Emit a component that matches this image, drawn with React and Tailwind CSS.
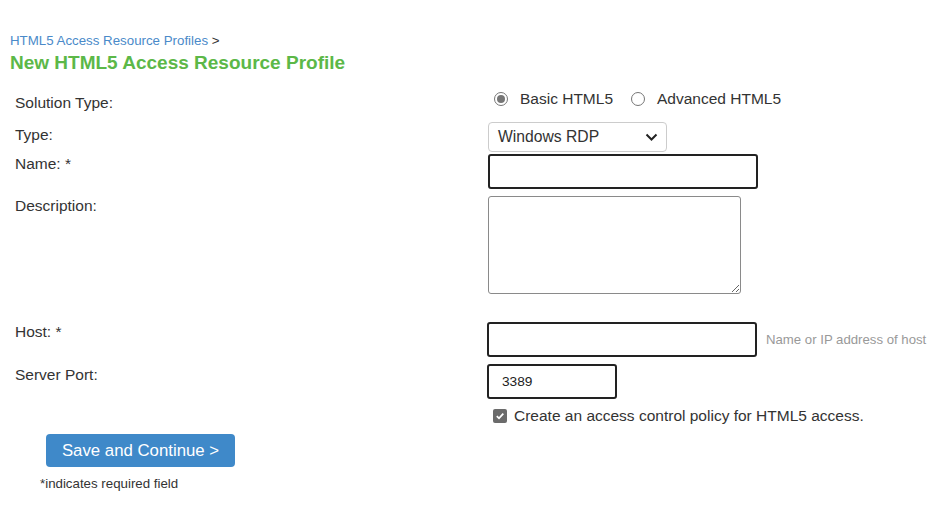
import React from 'react';

const Label = ({ children, top }) => (
  <div className={`w-[488px] shrink-0 pl-[15px] text-[15.5px] leading-[18px] text-[#333] ${top}`}>{children}</div>
);

const Radio = ({ checked, label }) => (
  <label className="flex items-center gap-[12px]">
    <span className="flex h-[14px] w-[14px] items-center justify-center rounded-full border border-[#767676] bg-white">
      {checked && <span className="h-[8px] w-[8px] rounded-full bg-[#767676]" />}
    </span>
    <span className="text-[15.5px] leading-[18px] text-[#333]">{label}</span>
  </label>
);

export default function App() {
  return (
    <div className="min-h-[505px] w-[942px] bg-white pt-[33px] font-['Liberation_Sans',Arial,sans-serif]">
      <div className="pl-[10px] text-[13.3px] leading-[16px]">
        <a className="text-[#4a8ac9]">HTML5 Access Resource Profiles</a>
        <span className="text-[#333]"> &gt;</span>
      </div>
      <h1 className="mt-[3px] pl-[10px] text-[19px] font-bold leading-[22px] text-[#5cb848]">
        New HTML5 Access Resource Profile
      </h1>

      {/* solution type */}
      <div className="mt-[14px] flex h-[34px]">
        <Label top="pt-[6px]">Solution Type:</Label>
        <div className="flex h-[22px] items-center pl-[6px]">
          <div className="flex items-center gap-[18px]">
            <Radio checked label="Basic HTML5" />
            <Radio label="Advanced HTML5" />
          </div>
        </div>
      </div>

      {/* type */}
      <div className="flex h-[32px] items-start">
        <Label top="pt-[4px]">Type:</Label>
        <div className="flex h-[30px] w-[179px] items-center justify-between rounded-[4px] border border-[#ccc] pl-[9px] pr-[8px]">
          <span className="text-[15.7px] text-[#333]">Windows RDP</span>
          <svg width="13" height="9" viewBox="0 0 13 9" fill="none">
            <path d="M1.5 1.5 L6.5 6.5 L11.5 1.5" stroke="#222" strokeWidth="2" />
          </svg>
        </div>
      </div>

      {/* name */}
      <div className="flex h-[42px] items-start">
        <Label top="pt-[1px]">Name: *</Label>
        <input className="h-[35px] w-[270px] rounded-[3px] border-2 border-[#222] bg-white px-2 outline-none" />
      </div>

      {/* description */}
      <div className="flex h-[126px] items-start">
        <Label top="pt-[1px]">Description:</Label>
        <textarea className="h-[98px] w-[253px] resize rounded-[3px] border border-[#8a8a8a] bg-white outline-none" />
      </div>

      {/* host */}
      <div className="flex h-[42px] items-start">
        <Label top="pt-[1px]">Host: *</Label>
        <div className="ml-[-1px] flex h-[35px] items-center gap-[9px]">
          <input className="h-[35px] w-[270px] rounded-[3px] border-2 border-[#222] bg-white px-2 outline-none" />
          <span className="text-[13.2px] text-[#999]">Name or IP address of host</span>
        </div>
      </div>

      {/* server port */}
      <div className="flex h-[43px] items-start">
        <Label top="pt-[2px]">Server Port:</Label>
        <input
          defaultValue="3389"
          className="ml-[-1px] h-[35px] w-[130px] rounded-[3px] border-2 border-[#222] bg-white pl-[13px] text-[13.7px] text-[#222] outline-none"
        />
      </div>

      <div className="flex items-center pl-[493px]">
        <span className="flex h-[14px] w-[14px] items-center justify-center rounded-[2px] bg-[#6b6b6b]">
          <svg width="10" height="10" viewBox="0 0 10 10" fill="none">
            <path d="M1.8 5.2 L4 7.3 L8.3 2.6" stroke="#fff" strokeWidth="1.8" />
          </svg>
        </span>
        <span className="ml-[7px] text-[15.5px] leading-[18px] text-[#333]">
          Create an access control policy for HTML5 access.
        </span>
      </div>

      <div className="mt-[9px] pl-[46px]">
        <button className="h-[33px] w-[189px] rounded-[4px] bg-[#3f89c9] text-[16.8px] text-white">
          Save and Continue &gt;
        </button>
      </div>
      <p className="mt-[10px] pl-[40px] text-[13.3px] leading-[14px] text-[#333]">*indicates required field</p>
    </div>
  );
}
